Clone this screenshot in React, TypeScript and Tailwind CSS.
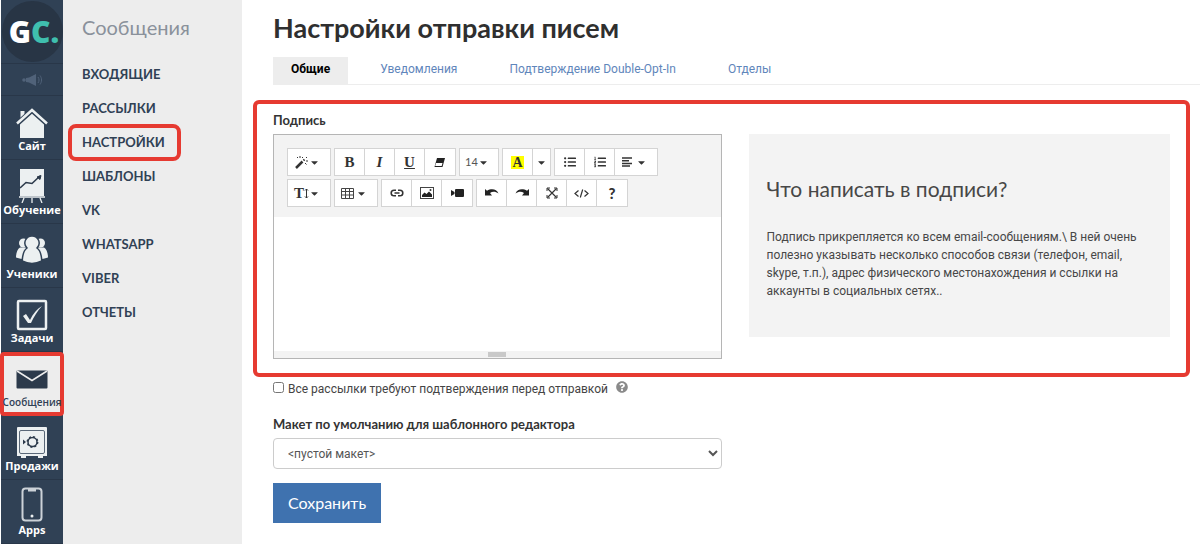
import { clsx } from 'clsx'
import type { ReactNode } from 'react'
import { FaCaretDown, FaListOl, FaListUl, FaQuestionCircle } from 'react-icons/fa'

function HornIcon() {
  return (
    <svg width="20" height="14" viewBox="0 0 20 14" fill="#506279">
      <circle cx="2" cy="7" r="1.8" />
      <path d="M4 5l3-.5L14 1v12L7 9.500 4 9z" />
      <path d="M16 4c1.400 1.800 1.400 4.200 0 6M18 2.500c2 2.700 2 6.300 0 9" fill="none" stroke="#506279" />
    </svg>
  )
}

function HouseIcon() {
  return (
    <svg width="32" height="31" viewBox="0 0 32 31">
      <path d="M4.500 3h4v4l-4 4z" fill="#ecf0f1" />
      <path d="M4 14.500L16 4l12 10.500V30H4z" fill="#ecf0f1" />
      <path d="M1.500 15.500L16 2.500l14.500 13" fill="none" stroke="#304155" strokeWidth="5" />
      <path d="M1 15.500L16 2l15 13.500" fill="none" stroke="#ecf0f1" strokeWidth="2.500" />
    </svg>
  )
}

function BoardIcon() {
  return (
    <svg width="26" height="34" viewBox="0 0 26 34" fill="none">
      <path d="M1 0h24v27H1z" fill="#ecf0f1" />
      <path d="M1 19l6-5.500 6 1L21 7" stroke="#2c3a4b" strokeWidth="1.600" />
      <path d="M18 8l4-1.500-1 4z" fill="#2c3a4b" stroke="#2c3a4b" />
      <path d="M0 28h26M5 29l-2 5M13 29v5M21 29l2 5" stroke="#ecf0f1" strokeWidth="1.300" />
    </svg>
  )
}

function PeopleIcon() {
  return (
    <svg width="32" height="31" viewBox="0 0 32 31" fill="#ecf0f1">
      <circle cx="7.500" cy="7" r="4.500" />
      <circle cx="24.500" cy="7" r="4.500" />
      <path d="M4 11.500h7L9 23c-3 0-6-.5-9-1.500C0 17 1.500 13 4 11.500zM28 11.500h-7L23 23c3 0 6-.5 9-1.500 0-4.500-1.500-8.500-4-10z" />
      <path
        d="M16 0a7 7 0 0 1 5 12c3 2 4.500 7 4.800 13-3 1.500-6 2.500-9.800 2.500S9 26.500 6.200 25C6.500 19 8 14 11 12a7 7 0 0 1 5-12z"
        stroke="#304155"
        strokeWidth="1.500"
      />
    </svg>
  )
}

function TaskIcon() {
  return (
    <svg width="32" height="32" viewBox="0 0 32 32" fill="none">
      <rect x="2" y="2" width="28" height="28" rx="1" stroke="#ecf0f1" strokeWidth="2.500" />
      <path d="M7 17l3-2 4 6C17 14.500 21 10 26 7c-4.500 5-8 10.500-11 17h-3z" fill="#ecf0f1" />
    </svg>
  )
}

function MailIcon() {
  return (
    <svg width="32" height="20" viewBox="0 0 32 20">
      <rect x="0.500" y="0.500" width="31" height="18" rx="1" fill="#2c3a4b" />
      <path d="M1 1l15 9.500L31 1" fill="none" stroke="#ededed" strokeWidth="1.500" />
    </svg>
  )
}

function SafeIcon() {
  return (
    <svg width="32" height="32" viewBox="0 0 32 32" fill="none">
      <path d="M2 0h28a1 1 0 0 1 1 1v28h-4v2h-5v-2H10v2H5v-2H1V1a1 1 0 0 1 1-1z" fill="#ecf0f1" />
      <rect x="3.500" y="3.500" width="25" height="23" rx="1.500" stroke="#5a6878" />
      <circle cx="16.500" cy="15" r="4.500" stroke="#2c3a4b" strokeWidth="1.500" />
      <circle cx="16.500" cy="15" r="5.200" stroke="#2c3a4b" strokeWidth="1.500" strokeDasharray="2 2.080" />
      <path d="M7 12.500v5l3-2.500z" fill="#2c3a4b" />
    </svg>
  )
}

function PhoneIcon() {
  return (
    <svg width="22" height="36" viewBox="0 0 22 36" fill="none">
      <rect x="1.500" y="1.500" width="19" height="32" rx="3" stroke="#ccd2d8" strokeWidth="2" />
      <path d="M7 2h8v2.500H7z" fill="#ccd2d8" />
      <circle cx="11" cy="29" r="1.500" fill="#ecf0f1" />
    </svg>
  )
}

const sections = [
  { label: 'Сайт', icon: <HouseIcon /> },
  { label: 'Обучение', icon: <BoardIcon /> },
  { label: 'Ученики', icon: <PeopleIcon /> },
  { label: 'Задачи', icon: <TaskIcon /> },
  { label: 'Сообщения', icon: <MailIcon />, active: true },
  { label: 'Продажи', icon: <SafeIcon /> },
  { label: 'Apps', icon: <PhoneIcon /> },
]

function Sidebar() {
  return (
    <nav className="flex w-[63px] shrink-0 flex-col border-l border-white bg-[#304155] font-['Open_Sans',sans-serif]">
      <a href="#" className="flex h-[63px] items-center justify-center">
        <span className="flex size-[61px] items-center justify-center rounded-full bg-[#283545] pl-1 text-[30px] leading-none font-extrabold text-white">
          G<span className="text-[#3fbfae]">C.</span>
        </span>
      </a>
      <a
        href="#"
        aria-label="Новости"
        className="flex h-[33px] items-center justify-center border-y border-[#293749]"
      >
        <HornIcon />
      </a>
      {sections.map(({ label, icon, active }) => (
        <a
          key={label}
          href="#"
          className={clsx(
            'flex h-16 flex-col items-center justify-end',
            active
              ? 'relative -mx-px rounded border-4 border-[#e63a31] bg-[#ededed] pb-[3px] text-[10px] font-semibold text-[#304155]'
              : 'border-b border-[#293749] pb-1.5 text-[11px] font-bold text-white',
          )}
        >
          <span className={clsx('flex flex-1', active ? 'items-center pt-2' : 'items-end')}>{icon}</span>
          <span className="leading-[14px]">{label}</span>
        </a>
      ))}
    </nav>
  )
}

const folders = ['Входящие', 'Рассылки', 'Настройки', 'Шаблоны', 'VK', 'WhatsApp', 'Viber', 'Отчеты']

function Folders() {
  return (
    <nav className="w-[179px] shrink-0 bg-[#ededed] pt-[11px] pl-[9px]">
      <h2 className="px-2.5 text-xl leading-8 text-[#8a919b]">Сообщения</h2>
      <ul className="mt-[14px] text-[13px] font-bold text-[#304155] uppercase">
        {folders.map((name) => (
          <li key={name} className="flex h-[34px] items-center">
            <a
              href="#"
              className={clsx(
                'pr-3 pl-2.5 leading-[29px]',
                name === 'Настройки' && 'rounded-sm outline-4 outline-[#e63a31]',
              )}
            >
              {name}
            </a>
          </li>
        ))}
      </ul>
    </nav>
  )
}

const tabs = ['Общие', 'Уведомления', 'Подтверждение Double-Opt-In', 'Отделы']

function Tabs() {
  return (
    <div className="mt-[9px] ml-5 flex border-b border-[#ededed] font-[Roboto,sans-serif] text-xs">
      {tabs.map((tab, i) => (
        <a
          key={tab}
          href="#"
          className={clsx(
            'pb-0.5 leading-[25px]',
            i === 0 ? 'mr-[6px] bg-[#ededed] px-[18px] font-bold text-black' : 'px-[26px] text-[#5f86bb]',
          )}
        >
          {tab}
        </a>
      ))}
    </div>
  )
}

function Group({ children }: { children: ReactNode }) {
  return <div className="flex divide-x divide-[#d4d4d4] border border-[#d4d4d4] bg-white">{children}</div>
}

function Tool({ label, wide, children }: { label: string; wide?: boolean; children: ReactNode }) {
  return (
    <button
      type="button"
      aria-label={label}
      title={label}
      className={clsx('flex h-[26px] items-center justify-center', wide ? 'w-[42px] pr-1' : 'w-[30px]')}
    >
      {children}
      {wide && <FaCaretDown size={11} />}
    </button>
  )
}

const serif = "font-['Liberation_Serif',serif] text-[15px] font-bold"

function Toolbar() {
  return (
    <div className="flex flex-col gap-[3px] bg-[#f3f3f3] px-[13px] pt-[13px] pb-[10px] text-[#333]">
      <div className="flex gap-[3px]">
        <Group>
          <Tool label="Стиль" wide>
            <svg width="14" height="14" viewBox="0 0 14 14" stroke="#333">
              <path d="M1 13l6.500-6.500" strokeWidth="2.500" />
              <path d="M8.500 5.500l1-1" strokeWidth="2" />
              <path d="M5 1v2M2 2l1 1M8 2L7 3M11 3l1-1M11 6h2M10 8l1.500 1.500" strokeWidth="1" />
            </svg>
          </Tool>
        </Group>
        <Group>
          <Tool label="Полужирный">
            <span className={serif}>B</span>
          </Tool>
          <Tool label="Курсив">
            <span className={clsx(serif, 'italic')}>I</span>
          </Tool>
          <Tool label="Подчёркнутый">
            <span className={clsx(serif, 'underline')}>U</span>
          </Tool>
          <Tool label="Очистить">
            <svg width="12" height="11" viewBox="0 0 12 11">
              <path d="M3 1h8L8.500 10h-8z" fill="#222" />
              <path d="M2 6h6.500l-.8 3H1.200z" fill="#fff" />
            </svg>
          </Tool>
        </Group>
        <Group>
          <button
            type="button"
            className="flex h-[26px] w-[38px] items-center justify-center pr-1 text-[11px] text-[#555]"
          >
            14
            <FaCaretDown size={11} color="#333" />
          </button>
        </Group>
        <Group>
          <Tool label="Цвет">
            <span className="bg-[#ffff00] px-px font-['Liberation_Serif',serif] text-[14px] leading-[13px] font-bold">
              A
            </span>
          </Tool>
          <button type="button" aria-label="Выбор цвета" className="flex w-[17px] items-center justify-center">
            <FaCaretDown size={11} />
          </button>
        </Group>
        <Group>
          <Tool label="Список">
            <FaListUl size={12} />
          </Tool>
          <Tool label="Нумерация">
            <FaListOl size={12} />
          </Tool>
          <Tool label="Выравнивание" wide>
            <svg width="14" height="10" viewBox="0 0 14 10" stroke="#333" strokeWidth="1.500">
              <path d="M0 1h10M0 3.700h7M0 6.400h10M0 9h8" />
            </svg>
          </Tool>
        </Group>
      </div>
      <div className="flex gap-[3px]">
        <Group>
          <Tool label="Высота строки" wide>
            <span className={serif}>T</span>
            <svg width="5" height="11" viewBox="0 0 5 11" fill="none" stroke="#333">
              <path d="M2.500 1v9M1 2.500L2.500 1 4 2.500M1 8.500L2.500 10 4 8.500" />
            </svg>
          </Tool>
        </Group>
        <Group>
          <Tool label="Таблица" wide>
            <svg width="15" height="11" viewBox="0 0 15 11" fill="none" stroke="#444">
              <path d="M.5.500h12v10H.5zM.5 3.500h12M.5 7h12M4.500.500v10M8.500.500v10" />
            </svg>
          </Tool>
        </Group>
        <Group>
          <Tool label="Ссылка">
            <svg width="14" height="8" viewBox="0 0 14 8" fill="none" stroke="#333" strokeWidth="1.600">
              <path d="M6 1.200H4a2.800 2.800 0 0 0 0 5.600h2M8 1.200h2a2.800 2.800 0 0 1 0 5.600H8M4.500 4h5" />
            </svg>
          </Tool>
          <Tool label="Изображение">
            <svg width="14" height="12" viewBox="0 0 14 12">
              <rect x="0.500" y="0.500" width="13" height="11" fill="none" stroke="#444" />
              <path d="M2 10V8l2.500-2.500L6.500 7 9 4.500l3 3V10z" fill="#222" />
              <circle cx="10.500" cy="3" r="1" fill="#333" />
            </svg>
          </Tool>
          <Tool label="Видео">
            <svg width="13" height="8" viewBox="0 0 13 8" fill="#222">
              <path d="M0 1l3.500 2v2L0 7z" />
              <rect x="4" width="9" height="8" rx="1" />
            </svg>
          </Tool>
        </Group>
        <Group>
          <Tool label="Отменить">
            <svg width="14" height="9" viewBox="0 0 14 9" fill="#222">
              <path d="M0 0l2 1.700C6-.5 11.500-.5 13.500 4.500 10.500 2.200 7.500 2 5 4l2 2.500H0z" />
            </svg>
          </Tool>
          <Tool label="Повторить">
            <svg width="14" height="9" viewBox="0 0 14 9" fill="#222">
              <path d="M14 0l-2 1.700C8-.5 2.500-.5.500 4.500 3.500 2.200 6.500 2 9 4L7 6.500h7z" />
            </svg>
          </Tool>
          <Tool label="На весь экран">
            <svg width="12" height="12" viewBox="0 0 12 12" fill="none" stroke="#333">
              <path d="M1.500 1.500l9 9M10.500 1.500l-9 9" strokeWidth="1.200" />
              <path d="M1 4V1h3M8 1h3v3M11 8v3H8M4 11H1V8" />
            </svg>
          </Tool>
          <Tool label="Исходный код">
            <svg width="15" height="9" viewBox="0 0 15 9" fill="none" stroke="#333" strokeWidth="1.200">
              <path d="M4.500 1.500L1 4.500l3.500 3M10.500 1.500l3.500 3-3.500 3M8.700.500l-2.400 8" />
            </svg>
          </Tool>
          <Tool label="Справка">
            <span className="text-[15px] font-black">?</span>
          </Tool>
        </Group>
      </div>
    </div>
  )
}

function Signature() {
  return (
    <section className="mt-[15px] rounded-md border-4 border-[#e63a31] px-4 pt-1 pb-[14px]">
      <label htmlFor="signature" className="block pb-0.5 text-[13px] leading-6 font-bold text-[#333]">
        Подпись
      </label>
      <div className="grid grid-cols-2 items-start">
        <div className="border border-[#b5b5b5]">
          <Toolbar />
          <textarea id="signature" className="block h-[134px] w-full resize-none bg-white p-2.5 text-sm outline-none" />
          <div className="flex h-[7px] items-center justify-center bg-[#f3f3f3]">
            <span className="h-[5px] w-[18px] bg-[#c9c9c9]" />
          </div>
        </div>
        <aside className="ml-[27px] bg-[#f3f3f3] px-[18px] pt-[39px] pb-[37px] text-[#474747]">
          <h3 className="text-[21px] leading-8">Что написать в подписи?</h3>
          <p className="mt-[23px] font-[Roboto,sans-serif] text-xs leading-[18px]">
            Подпись прикрепляется ко всем email-сообщениям.\ В ней очень полезно указывать несколько способов связи
            (телефон, email, skype, т.п.), адрес физического местонахождения и ссылки на аккаунты в социальных
            сетях..
          </p>
        </aside>
      </div>
    </section>
  )
}

export default function App() {
  return (
    <div className="flex min-h-screen bg-white font-[Lato,sans-serif]">
      <Sidebar />
      <Folders />
      <main className="min-w-0 flex-1 pl-[11px]">
        <h1 className="ml-5 pt-2 text-[27px] leading-10 font-bold text-[#2f2f2f]">Настройки отправки писем</h1>
        <Tabs />
        <form className="mr-[10px]">
          <Signature />
          <div className="grid grid-cols-2 px-5 pt-0.5">
            <div>
              <div className="flex items-center gap-1 font-[Roboto,sans-serif] text-xs leading-5 text-[#444]">
                <input id="confirm" type="checkbox" className="mb-1 size-[11px]" />
                <label htmlFor="confirm" className="whitespace-nowrap">
                  Все рассылки требуют подтверждения перед отправкой
                </label>
                <FaQuestionCircle className="mb-1 ml-1" size={12} color="#8a8a8a" />
              </div>
              <label htmlFor="layout" className="mt-[15px] block text-[13px] leading-5 font-bold text-[#333]">
                Макет по умолчанию для шаблонного редактора
              </label>
              <select
                id="layout"
                className="mt-1 h-[31px] w-full rounded border border-[#ccc] bg-white px-2.5 font-[Roboto,sans-serif] text-xs text-[#555]"
              >
                <option>&lt;пустой макет&gt;</option>
              </select>
              <button type="submit" className="mt-[14px] block bg-[#3f72af] px-[15px] text-base leading-10 text-white">
                Сохранить
              </button>
            </div>
          </div>
        </form>
      </main>
    </div>
  )
}
